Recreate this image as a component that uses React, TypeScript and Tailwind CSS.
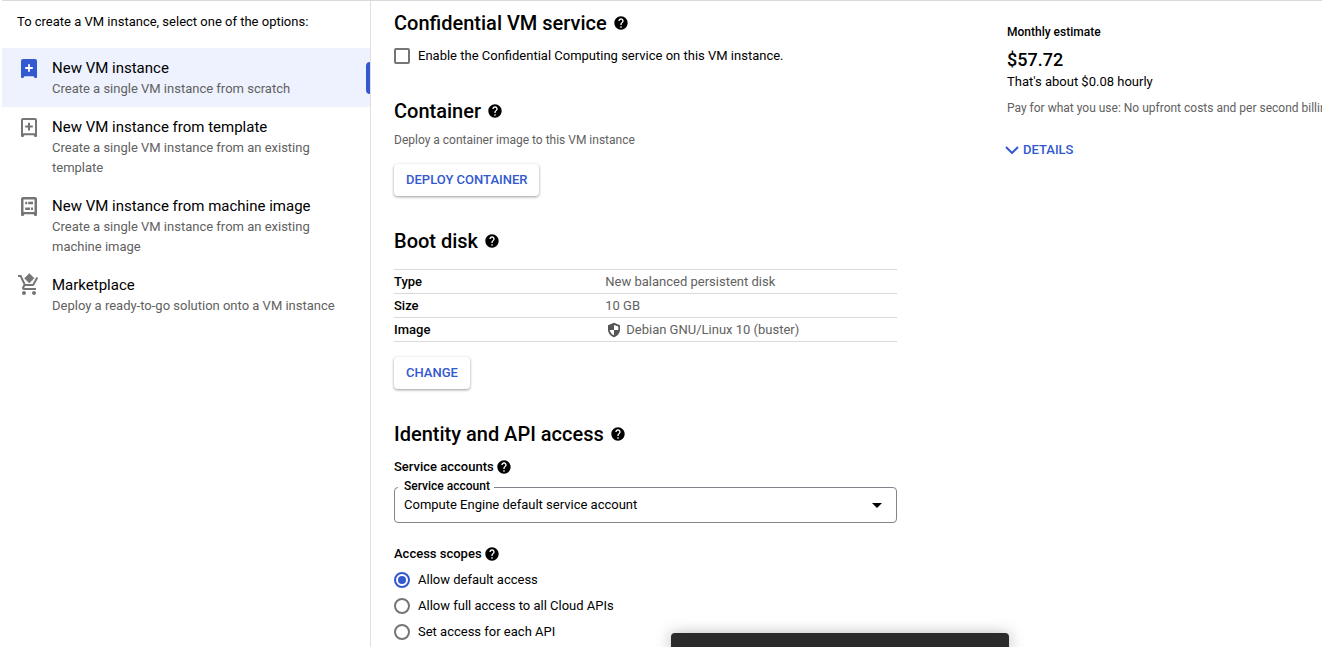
import type { ReactNode } from "react";
import { MdArrowDropDown, MdHelp } from "react-icons/md";

function ServerFrame({ children }: { children: ReactNode }) {
  return (
    <svg viewBox="0 0 16 19" className="h-[19px] w-4" fill="none" aria-hidden="true">
      {children}
    </svg>
  );
}

const feet = "M0 2a2 2 0 0 1 2-2h12a2 2 0 0 1 2 2v16a1 1 0 0 1-1 1h-1.4L12.600 17.300H3.400L2.400 19H1a1 1 0 0 1-1-1z";

function NewVmIcon() {
  return (
    <ServerFrame>
      <path d={feet} fill="#3259d0" />
      <path d="M8 5.2v7.6M4.2 9h7.6" stroke="#fff" strokeWidth="1.8" />
    </ServerFrame>
  );
}

function TemplateIcon() {
  return (
    <ServerFrame>
      <path d={feet + "M2 2v13.3h12V2z"} fill="#757575" fillRule="evenodd" />
      <path d="M8 4.8v7.6M4.2 8.6h7.6" stroke="#757575" strokeWidth="2" />
    </ServerFrame>
  );
}

function MachineImageIcon() {
  return (
    <ServerFrame>
      <path d={feet + "M2.500 2.500v12.500h11V2.500z"} fill="#757575" fillRule="evenodd" />
      <path d="M4.200 6h2M7.200 6h4.800M4.200 11.700h4.800M10 11.700h2" stroke="#757575" strokeWidth="2.400" />
    </ServerFrame>
  );
}

function MarketplaceIcon() {
  return (
    <svg viewBox="0 0 24 24" className="h-6 w-6 shrink-0" fill="#757575" aria-hidden="true">
      <path d="M12.3.6 17 5.3 12.3 10 7.600 5.300z" stroke="#757575" strokeWidth=".6" strokeLinejoin="round" />
      <path d="M7 18c-1.100 0-1.990.9-1.990 2S5.900 22 7 22s2-.9 2-2-.9-2-2-2zm10 0c-1.100 0-1.990.9-1.990 2s.89 2 1.990 2 2-.9 2-2-.9-2-2-2zm-9.830-3.250l.03-.12.9-1.630h7.450c.75 0 1.410-.41 1.750-1.030l3.860-7.010L19.420 4h-.01l-1.100 2-2.760 5H8.530l-.13-.27L6.160 6l-.95-2-.94-2H1v2h2l3.600 7.590-1.350 2.450c-.16.28-.25.61-.25.96 0 1.100.9 2 2 2h12v-2H7.420c-.13 0-.25-.11-.25-.25z" />
    </svg>
  );
}

function ShieldIcon() {
  return (
    <svg viewBox="0 0 16 16" className="size-4" fill="#555" aria-hidden="true">
      <path
        fillRule="evenodd"
        d="M8 .8 2 3.300v4.200c0 3.600 2.500 6.700 6 7.700 3.500-1 6-4.100 6-7.700V3.300zM8 3v5h4.300V4.600zM8 8H3.800c.3 2.400 1.900 4.400 4.200 5.300z"
      />
    </svg>
  );
}

function ChevronIcon() {
  return (
    <svg viewBox="0 0 14 8" className="h-2 w-3.5" fill="none" aria-hidden="true">
      <path d="m1 1 6 6 6-6" stroke="currentColor" strokeWidth="2" />
    </svg>
  );
}

type Option = { title: string; text: string; icon: ReactNode; active?: boolean };

const options: Option[] = [
  { title: "New VM instance", text: "Create a single VM instance from scratch", icon: <NewVmIcon />, active: true },
  { title: "New VM instance from template", text: "Create a single VM instance from an existing template", icon: <TemplateIcon /> },
  { title: "New VM instance from machine image", text: "Create a single VM instance from an existing machine image", icon: <MachineImageIcon /> },
  { title: "Marketplace", text: "Deploy a ready-to-go solution onto a VM instance", icon: <MarketplaceIcon /> },
];

function Help({ topic }: { topic: string }) {
  return (
    <button type="button" aria-label={`Help: ${topic}`} className="text-black">
      <MdHelp size={16} />
    </button>
  );
}

function SectionTitle({ children }: { children: string }) {
  return (
    <div className="flex items-center gap-1.5">
      <h2 className="text-[20px] leading-7 font-medium">{children}</h2>
      <Help topic={children} />
    </div>
  );
}

function SubTitle({ children }: { children: string }) {
  return (
    <div className="flex items-center gap-0.5">
      <h3 className="text-[13px] leading-5 font-medium">{children}</h3>
      <Help topic={children} />
    </div>
  );
}

function RaisedButton({ children }: { children: string }) {
  return (
    <button
      type="button"
      className="h-8 rounded-sm bg-white px-3 text-[13px] font-medium text-[#3259d0] shadow-[0_1px_3px_rgba(0,0,0,0.4)]"
    >
      {children}
    </button>
  );
}

const disk: [string, ReactNode][] = [
  ["Type", "New balanced persistent disk"],
  ["Size", "10 GB"],
  [
    "Image",
    <span className="flex items-center gap-1 pl-px">
      <ShieldIcon />
      Debian GNU/Linux 10 (buster)
    </span>,
  ],
];

const scopes = ["Allow default access", "Allow full access to all Cloud APIs", "Set access for each API"];

export default function App() {
  return (
    <div className="relative h-screen overflow-hidden bg-white pl-0.5 font-[Roboto,sans-serif] text-[13px] leading-5 text-black">
      <div className="flex h-full border-t border-[#dadada]">
        <nav className="w-[369px] shrink-0 border-r border-[#e0e0e0]">
          <p className="px-[15px] pt-[11px] pb-4">To create a VM instance, select one of the options:</p>
          <ul>
            {options.map((o) => (
              <li key={o.title}>
                <a
                  href="#"
                  aria-current={o.active ? "page" : undefined}
                  className={
                    o.active
                      ? "flex items-start bg-[#edf2fe] pt-[9px] pb-2"
                      : "flex items-start pt-[9px] pb-2"
                  }
                >
                  <span className="flex h-[22px] w-[50px] shrink-0 items-center justify-center pl-[3px]">{o.icon}</span>
                  <span className="flex-1 pr-6">
                    <span className="block text-[15px] leading-[22px]">{o.title}</span>
                    <span className="block text-[#616161]">{o.text}</span>
                  </span>
                  {o.active && <span className="h-8 w-1 self-center rounded-l-sm bg-[#3259d0]" />}
                </a>
              </li>
            ))}
          </ul>
        </nav>

        <main className="min-w-0 flex-1 pt-2 pl-[23px]">
          <SectionTitle>Confidential VM service</SectionTitle>
          <label className="mt-[9px] flex items-center gap-2">
            <input type="checkbox" className="size-4 appearance-none rounded-xs border-2 border-[#757575] bg-white" />
            Enable the Confidential Computing service on this VM instance.
          </label>

          <section className="mt-[31px]">
            <SectionTitle>Container</SectionTitle>
            <p className="mt-[5px] mb-3.5 text-xs leading-5 text-[#616161]">Deploy a container image to this VM instance</p>
            <RaisedButton>DEPLOY CONTAINER</RaisedButton>
          </section>

          <section className="mt-[31px]">
            <SectionTitle>Boot disk</SectionTitle>
            <table className="mt-3.5 mb-[15px] w-full border-collapse">
              <tbody>
                {disk.map(([name, value]) => (
                  <tr key={name} className="h-6 border-y border-[#dadada]">
                    <th scope="row" className="w-[42%] p-0 text-left font-medium">{name}</th>
                    <td className="p-0 text-[#616161]">{value}</td>
                  </tr>
                ))}
              </tbody>
            </table>
            <RaisedButton>CHANGE</RaisedButton>
          </section>

          <section className="mt-[31px]">
            <SectionTitle>Identity and API access</SectionTitle>
            <div className="mt-[9px]">
              <SubTitle>Service accounts</SubTitle>
            </div>
            <div className="relative mt-2.5">
              <select
                id="service-account"
                className="h-9 w-full appearance-none rounded border border-[#80868b] bg-white px-[9px] text-[13px]"
              >
                <option>Compute Engine default service account</option>
              </select>
              <label
                htmlFor="service-account"
                className="absolute -top-[9px] left-1 bg-white pr-1 pl-1.5 text-xs leading-4 font-medium"
              >
                Service account
              </label>
              <MdArrowDropDown size={24} className="pointer-events-none absolute top-1.5 right-2" />
            </div>
            <div className="mt-[21px]">
              <SubTitle>Access scopes</SubTitle>
            </div>
            <div className="mt-1.5 flex flex-col gap-1.5">
              {scopes.map((s, i) => (
                <label key={s} className="flex items-center gap-2">
                  <input
                    type="radio"
                    name="scope"
                    defaultChecked={i === 0}
                    className="grid size-4 appearance-none place-content-center rounded-full border-2 border-[#757575] bg-white checked:border-[#3259d0] checked:before:size-2 checked:before:rounded-full checked:before:bg-[#3259d0]"
                  />
                  {s}
                </label>
              ))}
            </div>
          </section>
        </main>

        <aside className="ml-[110px] w-[315px] shrink-0 pt-[21px] whitespace-nowrap">
          <h3 className="text-xs leading-5 font-medium">Monthly estimate</h3>
          <p className="mt-1 text-lg leading-7 font-medium">$57.72</p>
          <p className="-mt-0.5 leading-5">That's about $0.08 hourly</p>
          <p className="mt-1.5 text-xs leading-5 text-[#616161]">Pay for what you use: No upfront costs and per second billing</p>
          <button type="button" className="mt-[22px] -ml-0.5 flex items-center gap-1 font-medium text-[#3259d0]">
            <ChevronIcon />
            DETAILS
          </button>
        </aside>
      </div>
      <div
        role="status"
        className="absolute bottom-0 left-[671px] h-3.5 w-[338px] rounded-t bg-[#2b2b2b] shadow-[0_2px_16px_rgba(0,0,0,0.35)]"
      />
    </div>
  );
}
